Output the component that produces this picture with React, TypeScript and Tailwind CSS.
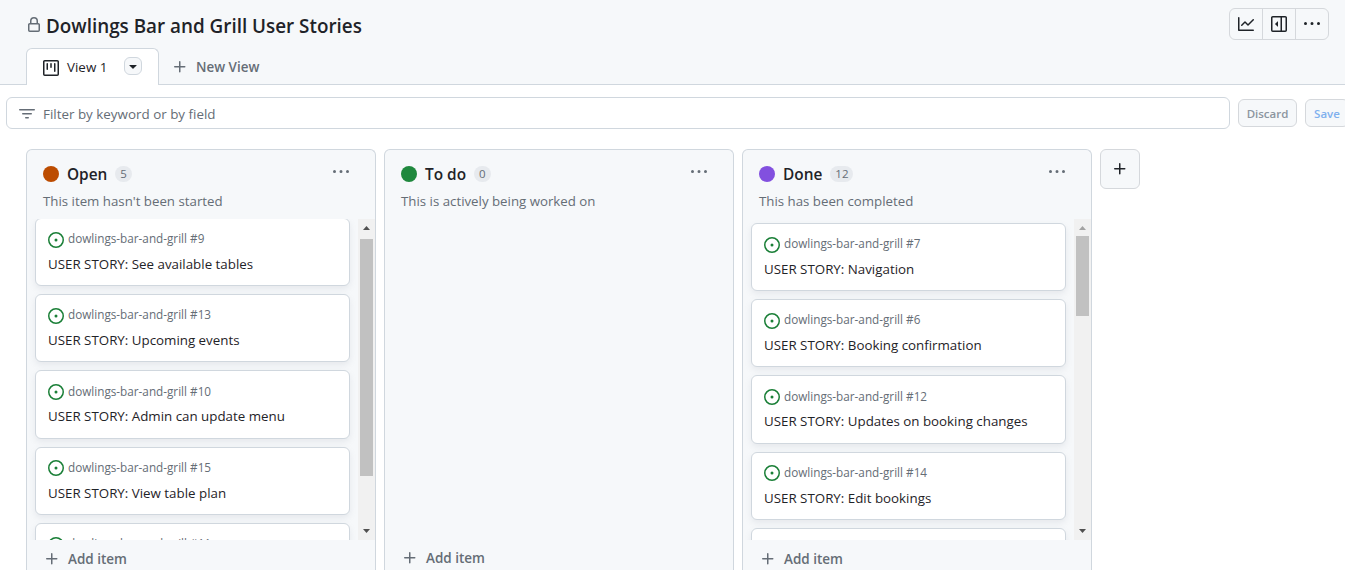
import type { ReactNode } from "react";

type Story = { id: number; title: string };
type ColumnData = {
  name: string;
  count: number;
  dot: string;
  description: string;
  offset: string;
  stories: Story[];
  thumb: string;
  atTop: boolean;
};

const columns: ColumnData[] = [
  {
    name: "Open",
    count: 5,
    dot: "bg-[#bc4c00]",
    description: "This item hasn't been started",
    offset: "-mt-[1.1px]",
    thumb: "mt-[3px] h-[237px]",
    atTop: false,
    stories: [
      { id: 9, title: "USER STORY: See available tables" },
      { id: 13, title: "USER STORY: Upcoming events" },
      { id: 10, title: "USER STORY: Admin can update menu" },
      { id: 15, title: "USER STORY: View table plan" },
      { id: 11, title: "" },
    ],
  },
  {
    name: "To do",
    count: 0,
    dot: "bg-[#1f883d]",
    description: "This is actively being worked on",
    offset: "",
    thumb: "",
    atTop: true,
    stories: [],
  },
  {
    name: "Done",
    count: 12,
    dot: "bg-[#8250df]",
    description: "This has been completed",
    offset: "mt-[3.9px]",
    thumb: "h-[80px]",
    atTop: true,
    stories: [
      { id: 7, title: "USER STORY: Navigation" },
      { id: 6, title: "USER STORY: Booking confirmation" },
      { id: 12, title: "USER STORY: Updates on booking changes" },
      { id: 14, title: "USER STORY: Edit bookings" },
      { id: 0, title: "" },
    ],
  },
];

function Icon({ children, className = "" }: { children: ReactNode; className?: string }) {
  return (
    <svg viewBox="0 0 16 16" width="16" height="16" fill="currentColor" className={"shrink-0 " + className}>
      {children}
    </svg>
  );
}

const Lock = () => (
  <Icon>
    <path d="M4 4a4 4 0 0 1 8 0v2h.25c.966 0 1.75.784 1.75 1.75v5.5A1.75 1.75 0 0 1 12.25 15h-8.5A1.75 1.75 0 0 1 2 13.25v-5.5C2 6.784 2.784 6 3.75 6H4Zm8.25 3.5h-8.5a.25.25 0 0 0-.25.25v5.5c0 .138.112.25.25.25h8.5a.25.25 0 0 0 .25-.25v-5.5a.25.25 0 0 0-.25-.25ZM10.5 6V4a2.5 2.5 0 1 0-5 0v2Z" />
  </Icon>
);
const Board = () => (
  <Icon>
    <path d="M1.75 0h12.5C15.216 0 16 .784 16 1.75v12.5A1.75 1.75 0 0 1 14.25 16H1.75A1.75 1.75 0 0 1 0 14.25V1.75C0 .784.784 0 1.75 0ZM1.5 1.75v12.5c0 .138.112.25.25.25h12.5a.25.25 0 0 0 .25-.25V1.75a.25.25 0 0 0-.25-.25H1.75a.25.25 0 0 0-.25.25ZM11.75 3a.75.75 0 0 1 .75.75v7.5a.75.75 0 0 1-1.5 0v-7.5a.75.75 0 0 1 .75-.75Zm-8.25.75a.75.75 0 0 1 1.5 0v5.5a.75.75 0 0 1-1.5 0ZM8 3a.75.75 0 0 1 .75.75v3.5a.75.75 0 0 1-1.5 0v-3.5A.75.75 0 0 1 8 3Z" />
  </Icon>
);
const Caret = () => (
  <Icon>
    <path d="m4.427 7.427 3.396 3.396a.25.25 0 0 0 .354 0l3.396-3.396A.25.25 0 0 0 11.396 7H4.604a.25.25 0 0 0-.177.427Z" />
  </Icon>
);
const Plus = () => (
  <Icon>
    <path d="M7.75 2a.75.75 0 0 1 .75.75V7h4.25a.75.75 0 0 1 0 1.5H8.5v4.25a.75.75 0 0 1-1.5 0V8.5H2.75a.75.75 0 0 1 0-1.5H7V2.75A.75.75 0 0 1 7.75 2Z" />
  </Icon>
);
const Graph = () => (
  <Icon>
    <path d="M1.5 1.75V13.5h13.75a.75.75 0 0 1 0 1.5H.75a.75.75 0 0 1-.75-.75V1.75a.75.75 0 0 1 1.5 0Zm14.28 2.53-5.25 5.25a.75.75 0 0 1-1.06 0L7 7.06 4.28 9.78a.751.751 0 0 1-1.042-.018.751.751 0 0 1-.018-1.042l3.25-3.25a.75.75 0 0 1 1.06 0L10 7.94l4.72-4.72a.751.751 0 0 1 1.042.018.751.751 0 0 1 .018 1.042Z" />
  </Icon>
);
const Sidebar = () => (
  <Icon>
    <path d="m4.177 7.823 2.396-2.396A.25.25 0 0 1 7 5.604v4.792a.25.25 0 0 1-.427.177L4.177 8.177a.25.25 0 0 1 0-.354Z" />
    <path d="M0 1.75C0 .784.784 0 1.75 0h12.5C15.216 0 16 .784 16 1.75v12.5A1.75 1.75 0 0 1 14.25 16H1.75A1.75 1.75 0 0 1 0 14.25Zm1.75-.25a.25.25 0 0 0-.25.25v12.5c0 .138.112.25.25.25H9.5v-13Zm12.5 13a.25.25 0 0 0 .25-.25V1.75a.25.25 0 0 0-.25-.25H11v13Z" />
  </Icon>
);
const Kebab = () => (
  <Icon>
    <path d="M8 9a1.5 1.5 0 1 0 0-3 1.5 1.5 0 0 0 0 3ZM1.5 9a1.5 1.5 0 1 0 0-3 1.5 1.5 0 0 0 0 3Zm13 0a1.5 1.5 0 1 0 0-3 1.5 1.5 0 0 0 0 3Z" />
  </Icon>
);
const Filter = () => (
  <Icon>
    <path d="M.75 3h14.5a.75.75 0 0 1 0 1.5H.75a.75.75 0 0 1 0-1.5ZM3 7.75A.75.75 0 0 1 3.75 7h8.5a.75.75 0 0 1 0 1.5h-8.5A.75.75 0 0 1 3 7.75Zm3 4a.75.75 0 0 1 .75-.75h2.5a.75.75 0 0 1 0 1.5h-2.5a.75.75 0 0 1-.75-.75Z" />
  </Icon>
);
const Issue = () => (
  <Icon className="text-[#1a7f37]">
    <path d="M8 9.5a1.5 1.5 0 1 0 0-3 1.5 1.5 0 0 0 0 3Z" />
    <path d="M8 0a8 8 0 1 1 0 16A8 8 0 0 1 8 0ZM1.5 8a6.5 6.5 0 1 0 13 0 6.5 6.5 0 0 0-13 0Z" />
  </Icon>
);

function Arrow({ up, muted }: { up?: boolean; muted?: boolean }) {
  return (
    <svg viewBox="0 0 7 4" width="7" height="4" className={muted ? "text-[#a3a3a3]" : "text-[#505050]"} fill="currentColor">
      <path d={up ? "M3.5 0 7 4H0Z" : "M0 0h7L3.5 4Z"} />
    </svg>
  );
}

function Card({ story }: { story: Story }) {
  return (
    <article className="h-[68.25px] w-[315px] shrink-0 rounded-md border border-[#d0d7de] bg-white px-3 pt-[9px] shadow-[0_3px_6px_rgba(140,149,159,0.15)]">
      {story.id > 0 && (
        <div className="flex h-5 items-center gap-1">
          <div className="pt-[3.5px]"><Issue /></div>
          <span className="whitespace-nowrap pt-[2px] text-[11.73px] text-[#656d76]">dowlings-bar-and-grill #{story.id}</span>
        </div>
      )}
      {story.title && (
        <h3 className="mt-[7px] flex h-5 items-center whitespace-nowrap text-[13.33px] text-[#1f2328]">{story.title}</h3>
      )}
    </article>
  );
}

function Column({ column }: { column: ColumnData }) {
  const filled = column.stories.length > 0;
  return (
    <section className="flex h-[421px] w-[350px] shrink-0 flex-col rounded-t-md border border-b-0 border-[#d0d7de] bg-[#f6f8fa]">
      <header className="h-[69px] shrink-0 px-4 pt-[14px]">
        <div className="flex h-5 items-center">
          <span className={"size-4 rounded-full " + column.dot} />
          <h2 className="ml-2 pt-[2px] text-[15.4px] font-[550] leading-5 text-[#1f2328]">{column.name}</h2>
          <span className="ml-2 flex h-4 min-w-4 items-center justify-center rounded-full bg-[#e7eaee] px-[5px] text-[11.5px] font-medium text-[#656d76]">{column.count}</span>
          <span className="mb-[5px] ml-auto mr-[10px] text-[#656d76]"><Kebab /></span>
        </div>
        <p className="mt-2 flex h-5 items-center whitespace-nowrap text-[13.27px] text-[#656d76]">{column.description}</p>
      </header>
      <div className="flex h-[321px] shrink-0 overflow-hidden">
        <div className="flex flex-1 flex-col pl-2">
          <div className={"flex flex-col gap-2 " + column.offset}>
            {column.stories.map((s) => (
              <Card key={s.id} story={s} />
            ))}
          </div>
        </div>
        {filled && (
          <div className="flex w-[17px] shrink-0 flex-col items-center bg-[#f1f1f1]">
            <div className="flex h-[17px] items-center"><Arrow up muted={column.atTop} /></div>
            <div className={"w-[13px] bg-[#c1c1c1] " + column.thumb} />
            <div className="mt-auto flex h-[18px] items-center pb-px"><Arrow /></div>
          </div>
        )}
      </div>
      <button className={"flex h-[30px] shrink-0 items-start gap-2 pl-[17px] text-[#656d76] " + (filled ? "pt-[11px]" : "pt-[10px]")}>
        <Plus />
        <span className="text-[13.5px] font-[550] leading-[17px]">Add item</span>
      </button>
    </section>
  );
}

export default function App() {
  return (
    <main className="flex h-[570px] w-full flex-col overflow-hidden bg-white font-['Open_Sans',sans-serif] text-[#1f2328]">
      <header className="flex h-[85px] shrink-0 flex-col justify-between border-b border-[#d0d7de] bg-[#f6f8fa]">
        <div className="flex h-12 justify-between">
          <div className="flex h-[52px] items-center gap-1 pl-[26px]">
            <span className="mb-[2px] text-[#656d76]"><Lock /></span>
            <h1 className="whitespace-nowrap pt-px text-[18.85px] font-[550]">Dowlings Bar and Grill User Stories</h1>
          </div>
          <div className="mr-4 mt-2 flex h-8 divide-x divide-[#d5d8dc] rounded-md border border-[#d5d8dc] bg-[#f6f8fa]">
            <button className="flex w-[33px] items-center justify-center"><Graph /></button>
            <button className="flex w-[33px] items-center justify-center"><Sidebar /></button>
            <button className="flex w-[32px] items-center justify-center"><Kebab /></button>
          </div>
        </div>
        <nav className="-mb-px flex h-[37px] pl-[26px]">
          <div className="flex w-[133px] items-center rounded-t-md border border-b-0 border-[#d0d7de] bg-white pl-4">
            <span className="pt-[2px]"><Board /></span>
            <span className="ml-2 pt-px text-[13.4px]">View 1</span>
            <button className="mb-[2px] ml-auto mr-4 flex size-[18px] items-center justify-center rounded-md border border-[#d0d7de] bg-[#f6f8fa]"><Caret /></button>
          </div>
          <button className="flex items-center gap-2 pl-[13px] text-[#656d76]">
            <Plus />
            <span className="pt-px text-[13.4px] font-[550]">New View</span>
          </button>
        </nav>
      </header>
      <div className="flex shrink-0 items-center pl-[6px] pt-3">
        <div className="flex h-8 w-[1224px] shrink-0 items-center gap-2 rounded-md border border-[#d0d7de] pl-3 text-[#656d76]">
          <span className="pt-[2px]"><Filter /></span>
          <span className="pt-[2px] text-[13.4px]">Filter by keyword or by field</span>
        </div>
        <button className="ml-2 flex h-7 w-[59px] shrink-0 items-center justify-center rounded-md border border-[#d5d8dc] bg-[#f6f8fa] pt-[2px] text-[11.5px] font-[550] text-[#8c959f]">Discard</button>
        <button className="ml-2 flex h-7 w-[44px] shrink-0 items-center justify-center rounded-md border border-[#d5d8dc] bg-[#f6f8fa] pt-[2px] text-[11.5px] font-[550] text-[#80b0ee]">Save</button>
      </div>
      <div className="flex gap-2 pl-[26px] pt-5">
        {columns.map((c) => (
          <Column key={c.name} column={c} />
        ))}
        <button className="flex size-10 shrink-0 items-center justify-center rounded-md border border-[#d5d8dc] bg-[#f6f8fa]"><Plus /></button>
      </div>
    </main>
  );
}
